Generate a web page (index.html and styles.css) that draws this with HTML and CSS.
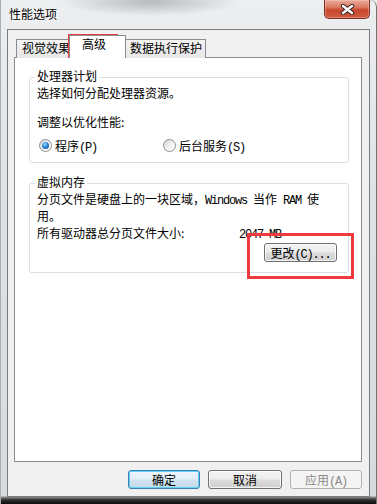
FILE: index.html
```html
<!DOCTYPE html>
<html lang="zh-CN">
  <head>
    <meta charset="UTF-8" />
    <meta name="viewport" content="width=device-width, initial-scale=1.0" />
    <title>性能选项</title>
    <link rel="stylesheet" href="styles.css">
  </head>

  <body>
    <div class="window">
      <div class="titlebar">
        <span class="title">性能选项</span>
        <div class="close">
          <svg width="15" height="11" viewBox="0 0 15 11">
            <path d="M3 2 L12 9 M12 2 L3 9" stroke="#3b2320" stroke-width="4.4" stroke-linecap="round" />
            <path d="M3 2 L12 9 M12 2 L3 9" stroke="#fff" stroke-width="2.4" stroke-linecap="round" />
          </svg>
        </div>
      </div>

      <div class="client">
        <div class="tabs">
          <div class="tab first">视觉效果</div>
          <div class="tab active">高级</div>
          <div class="tab last">数据执行保护</div>
        </div>

        <div class="panel">
          <div class="group cpu">
            <div class="legend">处理器计划</div>
            <div class="line first-line">选择如何分配处理器资源。</div>
            <div class="line adjust">调整以优化性能:</div>
            <div class="radios">
              <div class="radio-item program">
                <span class="radio checked"><span class="dot"></span></span>
                <span>程序<span class="mono">(P)</span></span>
              </div>
              <div class="radio-item">
                <span class="radio"></span>
                <span>后台服务<span class="mono">(S)</span></span>
              </div>
            </div>
          </div>

          <div class="group vm">
            <div class="legend">虚拟内存</div>
            <div class="line first-line">分页文件是硬盘上的一块区域，<span class="mono">Windows </span>当作<span class="mono"> RAM </span>使</div>
            <div class="line">用。</div>
            <div class="line"><span class="size-label">所有驱动器总分页文件大小:</span><span class="mono">2047 MB</span></div>
            <div class="change-row">
              <button class="btn change">更改<span class="mono">(C)...</span></button>
            </div>
          </div>
        </div>

        <div class="buttons">
          <button class="btn ok">确定</button>
          <button class="btn cancel">取消</button>
          <button class="btn apply" disabled>应用<span class="mono">(A)</span></button>
        </div>
      </div>

      <div class="mark mark-tab"></div>
      <div class="mark mark-change"></div>
    </div>
  </body>
</html>
```

FILE: styles.css
```css
* {
  box-sizing: border-box;
}

body {
  margin: 0;
  font-family: "Noto Sans CJK SC", "Noto Sans", sans-serif;
  font-size: 12px;
  color: #000;
  background: #e8eaec;
}

.window {
  position: relative;
  width: 377px;
  height: 504px;
  overflow: hidden;
  padding: 0 6px 7px 7px;
  border-right: 1px solid #727272;
  border-top-right-radius: 7px;
  background:
    radial-gradient(ellipse 90px 14px at 150px 2px, rgba(120, 124, 130, 0.45), transparent),
    linear-gradient(to bottom, #eceef0 0, #dfe2e5 200px, #d8dbde 496px, #8c8c8c 497px, #2e2e2e 500px, #0c0c0c 504px);
  box-shadow: inset 1px 0 0 #a9adb1;
}

.titlebar {
  display: flex;
  justify-content: space-between;
  height: 29px;
  padding-left: 2px;
}
.titlebar .title {
  padding-top: 5px;
  line-height: 17px;
  text-shadow: 0 0 6px #fff, 0 0 3px #fff;
}
.close {
  display: flex;
  align-items: center;
  justify-content: center;
  width: 46px;
  height: 19px;
  border: 1px solid #7a2d22;
  border-top: none;
  border-radius: 0 0 5px 5px;
  background: linear-gradient(#e9ab9b, #dc7a64 40%, #c8472f 55%, #cf5b41 100%);
  box-shadow: inset 0 0 0 1px rgba(255, 220, 210, 0.35);
}

.client {
  height: 468px;
  padding: 4px 7px 0 6px;
  border: 1px solid #7c7c7c;
  background: #f0f0f0;
}

.tabs {
  display: flex;
  align-items: flex-end;
  height: 24px;
  padding-left: 2px;
}
.tab {
  height: 19px;
  padding: 0 4px 0 5px;
  border: 1px solid #898c95;
  border-bottom: none;
  background: linear-gradient(#f4f4f4, #e7e7e7);
  line-height: 16px;
  white-space: nowrap;
  overflow: hidden;
}
.tab.first {
  width: 55px;
}
.tab.active {
  position: relative;
  z-index: 1;
  width: 57px;
  height: 23px;
  margin: 0 -1px 0 -2px;
  padding-left: 12px;
  background: #fff;
}
.tab.last {
  width: 81px;
  padding-left: 4px;
}

.panel {
  height: 405px;
  margin-top: -1px;
  padding: 19px 12px 0 14px;
  border: 1px solid #898c95;
  background: #fff;
}

.group {
  padding: 0 7px 8px 7px;
  border: 1px solid #d5dfe5;
  border-radius: 3px;
}
.group.vm {
  margin-top: 20px;
  padding-bottom: 10px;
}
.legend {
  width: fit-content;
  margin: -11px 0 0 -2px;
  padding: 0 2px;
  background: #fff;
  line-height: 17px;
}
.line {
  line-height: 17px;
  white-space: nowrap;
}
.line.first-line {
  margin-top: 0;
}
.line.adjust {
  margin-top: 12px;
}
.mono {
  font-family: "Liberation Mono", "DejaVu Sans Mono", monospace;
  line-height: 1;
  letter-spacing: -1.2px;
  white-space: pre;
}
.size-label {
  display: inline-block;
  width: 202px;
}

.radios {
  display: flex;
  margin-top: 7px;
  line-height: 17px;
}
.radio-item {
  display: flex;
  align-items: center;
  column-gap: 3px;
  margin-left: 2px;
}
.radio-item.program {
  width: 122px;
}
.radio {
  display: flex;
  align-items: center;
  justify-content: center;
  width: 13px;
  height: 13px;
  border: 1px solid #8b8d8f;
  border-radius: 50%;
  background: linear-gradient(135deg, #d6d8da, #fbfbfb 75%);
}
.radio .dot {
  width: 7px;
  height: 7px;
  border-radius: 50%;
  background: radial-gradient(circle at 40% 35%, #9ee0ff, #2c86d8 45%, #0c3f82 100%);
}

.change-row {
  display: flex;
  justify-content: flex-end;
  margin-top: 2px;
  padding-right: 4px;
}

.btn {
  height: 19px;
  padding: 0;
  border: 1px solid #707070;
  border-radius: 3px;
  background: linear-gradient(#f3f3f3, #ececec 48%, #dcdcdc 52%, #cfcfcf);
  box-shadow: inset 0 0 0 1px rgba(255, 255, 255, 0.75);
  font-family: inherit;
  font-size: 12px;
  line-height: 15px;
  color: #000;
}
.btn.change {
  width: 73px;
}

.buttons {
  display: flex;
  justify-content: flex-end;
  column-gap: 8px;
  margin-top: 8px;
}
.btn.ok {
  width: 72px;
  border-color: #3c7fb1;
  background: linear-gradient(#eef5fa, #e3eef6 48%, #d2e3ef 52%, #c6dae9);
  box-shadow: inset 0 0 0 1px #5fd3f5;
}
.btn.cancel {
  width: 74px;
}
.btn.apply {
  width: 72px;
  border-color: #adb2b5;
  background: #f4f4f4;
  box-shadow: none;
  color: #8a8a8a;
}

.mark {
  position: absolute;
  border: 3px solid #ef3a3d;
}
.mark-tab {
  left: 68px;
  top: 34px;
  width: 50px;
  height: 24px;
}
.mark-change {
  left: 247px;
  top: 233px;
  width: 107px;
  height: 46px;
}
```
